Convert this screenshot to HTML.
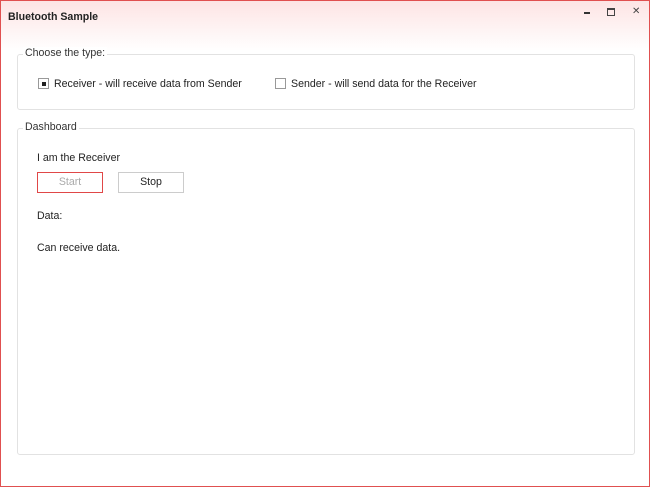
<!DOCTYPE html>
<html><head><style>
body{margin:0;width:650px;height:487px;overflow:hidden;font-family:"Liberation Sans",sans-serif;font-size:10.6px;color:#222;}
.win{position:absolute;left:0;top:0;width:648px;height:485px;border:1px solid #e05050;background:linear-gradient(#fde4e4 0px,#fff 50px,#fff);}
.title{position:absolute;left:7px;top:10px;font-weight:bold;font-size:10.6px;}
.gb{position:absolute;border:1px solid #e2e2e2;border-radius:3px;}
.lg{position:absolute;top:-8px;left:5px;background:#fff;padding:0 2px;color:#333;}
.t{position:absolute;white-space:nowrap;}
.cb{position:absolute;width:11px;height:11px;border:1px solid #999;background:#fff;box-sizing:border-box;}
.btn{position:absolute;height:21px;box-sizing:border-box;border:1px solid #ccc;background:#fff;text-align:center;line-height:19px;}
</style></head><body>
<div class="win">
<div class="title">Bluetooth Sample</div>
<div style="position:absolute;left:583px;top:11px;width:6px;height:2px;background:#333"></div>
<div style="position:absolute;left:606px;top:7px;width:6px;height:5px;border:1px solid #444;border-top-width:2px"></div>
<div class="t" style="left:631px;top:5px;font-size:10px;color:#444">✕</div>
<div class="gb" style="left:16px;top:53px;width:616px;height:54px;"><div class="lg">Choose the type:</div></div>
<div class="cb" style="left:37px;top:77px"><div style="position:absolute;left:3px;top:3px;width:4px;height:4px;background:#222"></div></div>
<div class="t" style="left:53px;top:77px">Receiver - will receive data from Sender</div>
<div class="cb" style="left:274px;top:77px"></div>
<div class="t" style="left:290px;top:77px">Sender - will send data for the Receiver</div>
<div class="gb" style="left:16px;top:127px;width:616px;height:325px;"><div class="lg">Dashboard</div></div>
<div class="t" style="left:36px;top:151px">I am the Receiver</div>
<div class="btn" style="left:36px;top:171px;width:66px;border-color:#e04848;color:#aaa">Start</div>
<div class="btn" style="left:117px;top:171px;width:66px">Stop</div>
<div class="t" style="left:36px;top:209px">Data:</div>
<div class="t" style="left:36px;top:241px">Can receive data.</div>
</div>
</body></html>
